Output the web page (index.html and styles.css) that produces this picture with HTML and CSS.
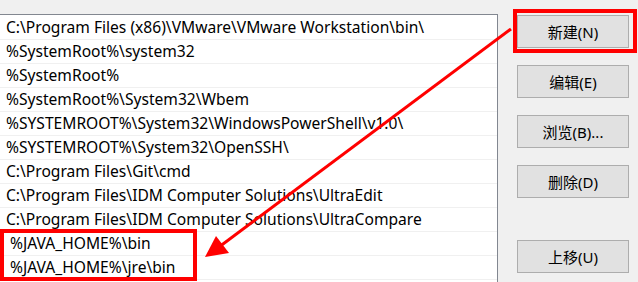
FILE: index.html
```html
<!DOCTYPE html>
<html lang="zh-CN">
<head>
    <meta charset="UTF-8">
    <title>编辑环境变量</title>
    <link rel="stylesheet" href="styles.css">
</head>
<body>
    <div class="dialog">
        <ul class="path-list">
            <li>C:\Program Files (x86)\VMware\VMware Workstation\bin\</li>
            <li>%SystemRoot%\system32</li>
            <li>%SystemRoot%</li>
            <li>%SystemRoot%\System32\Wbem</li>
            <li>%SYSTEMROOT%\System32\WindowsPowerShell\v1.0\</li>
            <li>%SYSTEMROOT%\System32\OpenSSH\</li>
            <li>C:\Program Files\Git\cmd</li>
            <li>C:\Program Files\IDM Computer Solutions\UltraEdit</li>
            <li>C:\Program Files\IDM Computer Solutions\UltraCompare</li>
            <li class="added">%JAVA_HOME%\bin</li>
            <li class="added">%JAVA_HOME%\jre\bin</li>
        </ul>
        <div class="actions">
            <button>新建(N)</button>
            <button>编辑(E)</button>
            <button>浏览(B)...</button>
            <button>删除(D)</button>
            <button class="spaced">上移(U)</button>
        </div>
    </div>

    <!-- annotations drawn over the dialog -->
    <div class="mark mark-new"></div>
    <div class="mark mark-java"></div>
    <svg class="arrow" width="638" height="282" viewBox="0 0 638 282">
        <line x1="511" y1="29" x2="215" y2="250" stroke="#ff0000" stroke-width="3"/>
        <polygon points="205,257 216,236 229,253" fill="#ff0000"/>
    </svg>
</body>
</html>
```

FILE: styles.css
```css
body {
    margin: 0;
    background-color: #f0f0f0;
    font-family: 'Noto Sans', 'Noto Sans CJK SC', sans-serif;
    color: #000;
    overflow: hidden;
    position: relative;
    width: 638px;
    height: 282px;
}

.dialog {
    display: flex;
    align-items: flex-start;
    padding-top: 14px;
}

.path-list {
    list-style: none;
    margin: 0 0 0 -1px;
    padding: 1px 0 0 0;
    width: 499px;
    height: 268px;
    background-color: #fff;
    border: 1px solid #828790;
    border-bottom: none;
    box-sizing: border-box;
    overflow: hidden;
}

.path-list li {
    height: 23px;
    line-height: 23px;
    padding-left: 6px;
    font-size: 15.6px;
    border-bottom: 1px solid #f0f0f0;
    white-space: nowrap;
}

.path-list li.added {
    padding-left: 10px;
}

.actions {
    display: flex;
    flex-direction: column;
    gap: 17px;
    margin-left: 19px;
    padding-top: 1px;
}

.actions button {
    width: 112px;
    height: 33px;
    padding: 0;
    background-color: #e1e1e1;
    border: 1px solid #adadad;
    font-family: 'Noto Sans', 'Noto Sans CJK SC', sans-serif;
    font-size: 15px;
    color: #000;
}

.actions .spaced {
    margin-top: 25px;
}

.mark {
    position: absolute;
    border: 4px solid #ff0000;
    box-sizing: border-box;
}

.mark-new {
    left: 513px;
    top: 9px;
    width: 124px;
    height: 44px;
}

.mark-java {
    left: 0;
    top: 229px;
    width: 197px;
    height: 52px;
}

.arrow {
    position: absolute;
    left: 0;
    top: 0;
}
```
